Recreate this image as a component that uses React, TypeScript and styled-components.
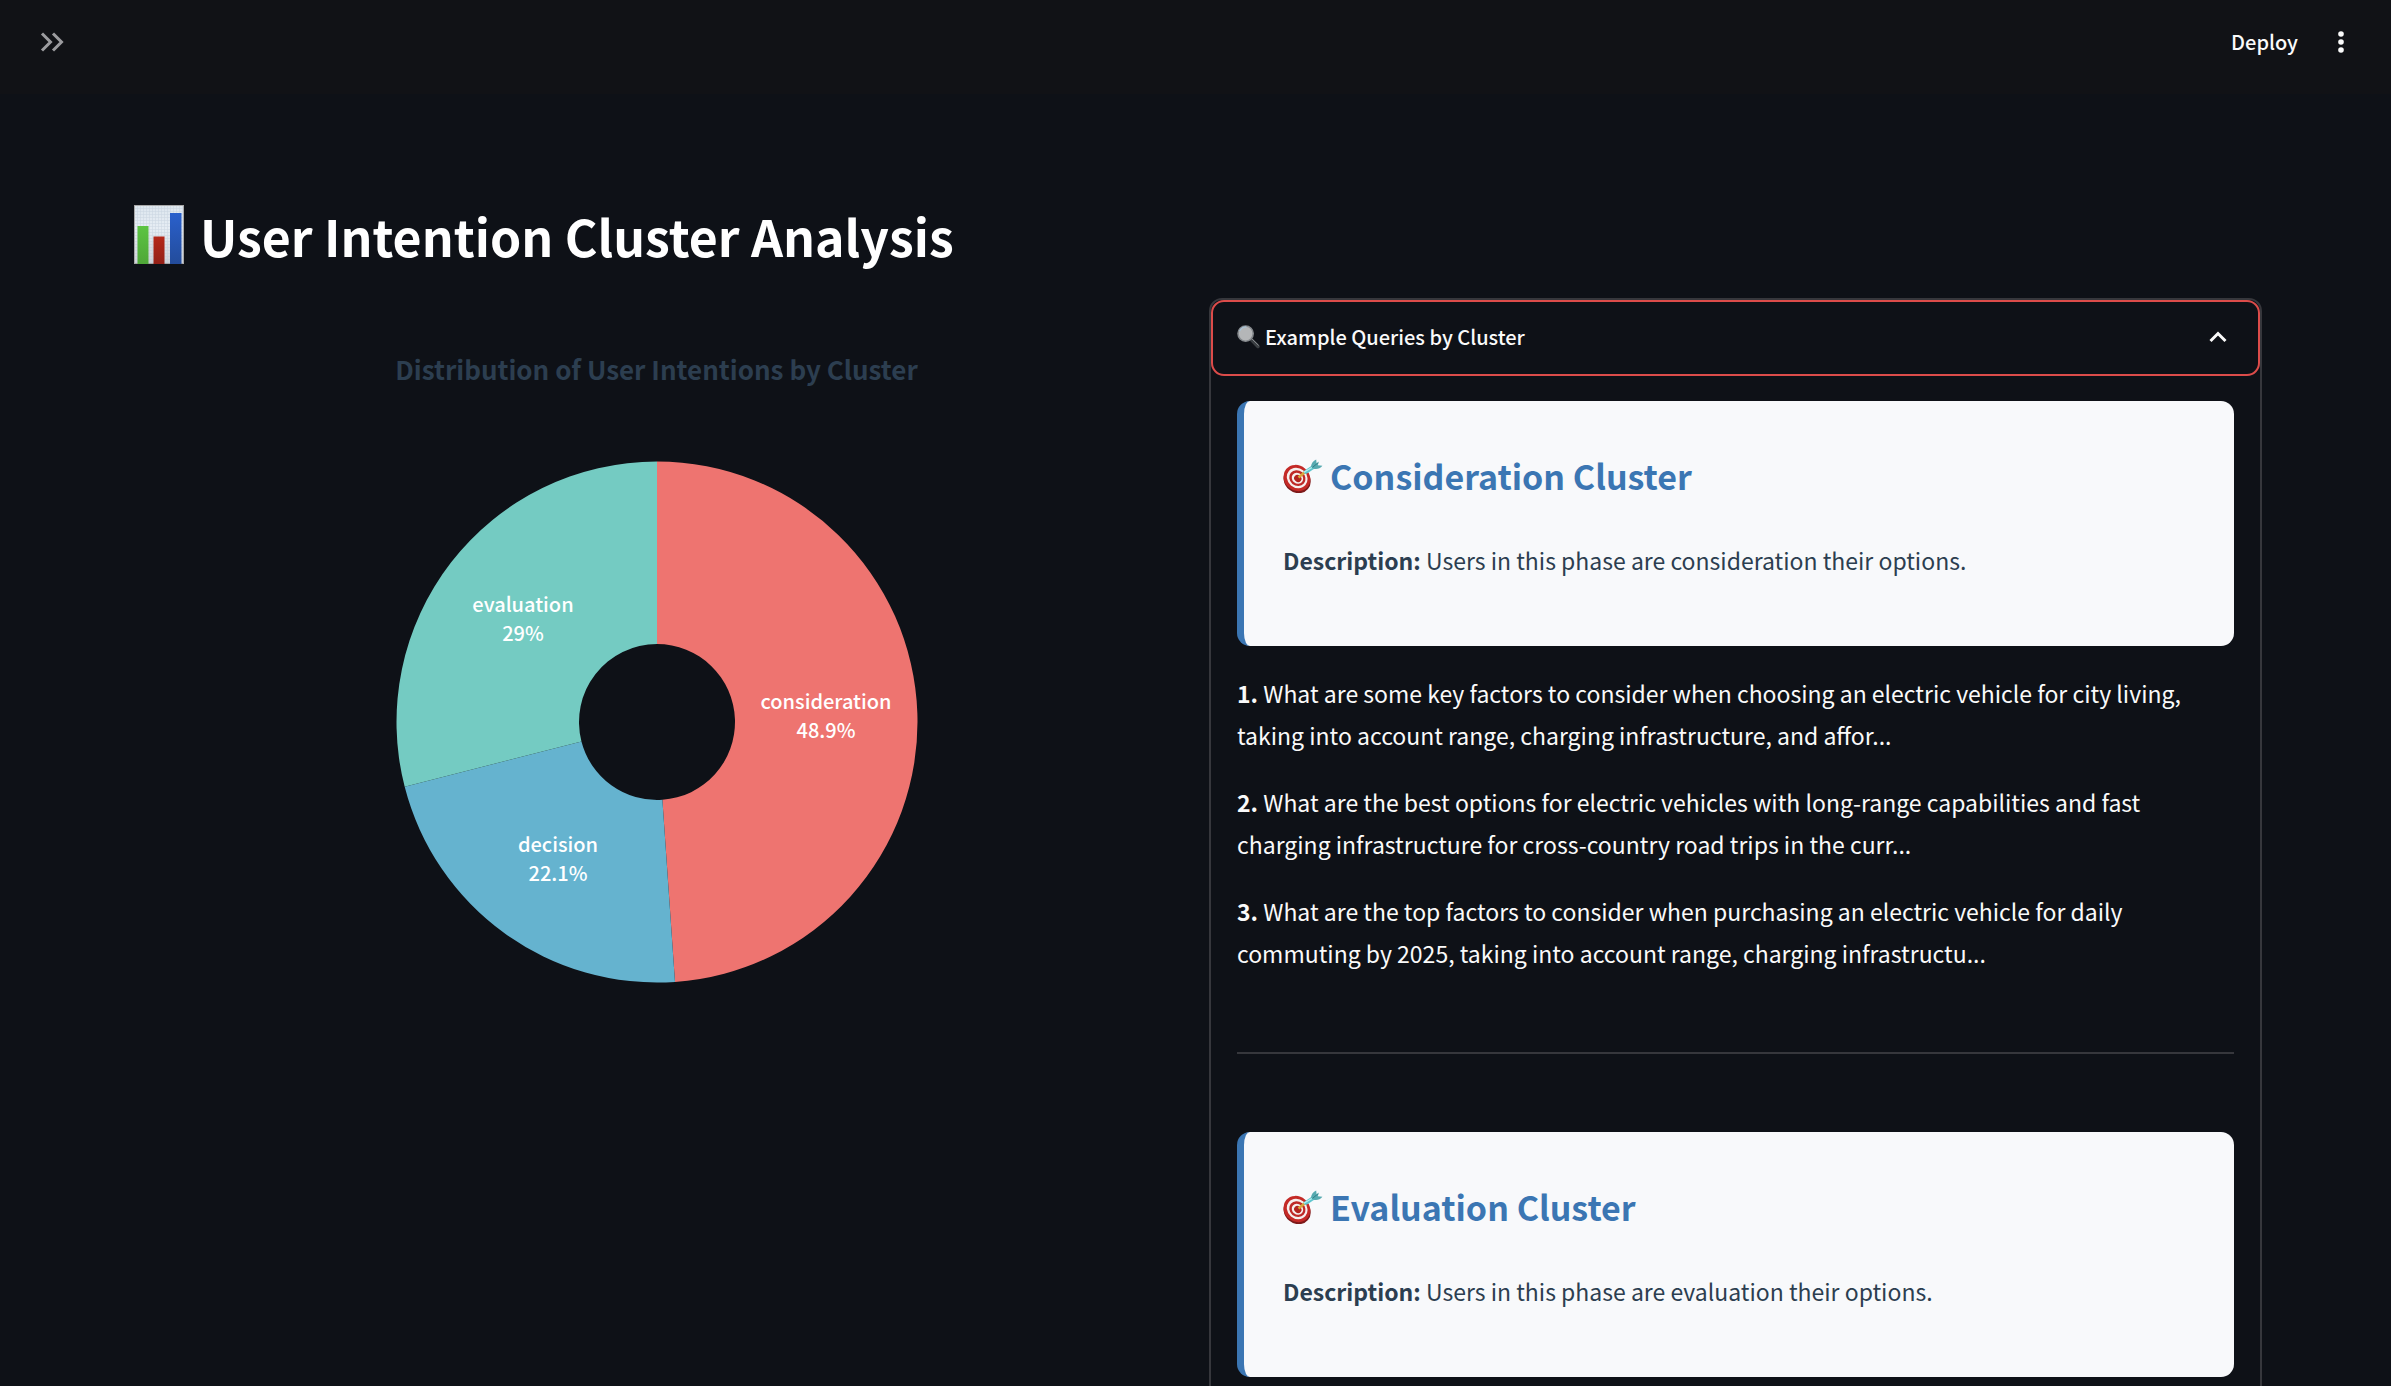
import React from 'react';
import styled, { createGlobalStyle } from 'styled-components';

const GlobalStyle = createGlobalStyle`
  *, *::before, *::after { box-sizing: border-box; }
  body {
    margin: 0;
    background: #0e1117;
    color: #fafafa;
    font-family: 'Noto Sans CJK JP', 'Noto Sans', sans-serif;
    font-size: 23px;
    line-height: 42px;
  }
`;

const Page = styled.div`
  height: 100vh;
  display: flex;
  flex-direction: column;
`;

const TopBar = styled.header`
  flex: none;
  display: flex;
  align-items: center;
  justify-content: space-between;
  height: 94px;
  padding: 0 31px 10px 33px;
  background: #111216;
`;

const Actions = styled.div`
  display: flex;
  align-items: center;
  gap: 24px;
`;

const BarButton = styled.button`
  display: flex;
  align-items: center;
  justify-content: center;
  min-width: 38px;
  height: 42px;
  padding: 0;
  border: 0;
  background: none;
  color: #fafafa;
  font: inherit;
  font-size: 20px;
  font-weight: 500;
  cursor: pointer;
`;

const Scroller = styled.main`
  flex: 1;
  min-height: 0;
  overflow: auto;
  scrollbar-width: none;
  padding: 101px 129px 0 130px;
`;

const PageTitle = styled.h1`
  display: flex;
  align-items: center;
  gap: 15px;
  margin: 0 0 23px;
  padding-left: 4px;
  font-size: 50px;
  font-weight: 700;
  line-height: 80px;
  color: #ffffff;
`;

const Columns = styled.div`
  display: grid;
  grid-template-columns: 1fr 1fr;
  gap: 26px;
  align-items: start;
`;

const Figure = styled.figure`
  display: flex;
  flex-direction: column;
  align-items: center;
  gap: 71px;
  margin: 0;
  padding-top: 50px;
`;

const FigureTitle = styled.figcaption`
  color: #2c3e50;
  font-size: 26px;
  font-weight: 700;
  line-height: 42px;
`;

const Donut = styled.svg`
  display: block;
  width: 522px;
  height: 522px;
`;

const SliceText = styled.text`
  fill: #ffffff;
  font-size: 20px;
  font-weight: 500;
  text-anchor: middle;
`;

const Expander = styled.details`
  border: 2px solid #36373c;
  border-radius: 13px;
  min-width: 0;
`;

const ExpanderHead = styled.summary`
  display: flex;
  align-items: center;
  gap: 4px;
  height: 76px;
  padding: 0 31px 3px 24px;
  border: 2px solid #dc4c4a;
  border-radius: 13px;
  font-size: 20px;
  font-weight: 500;
  list-style: none;
  cursor: pointer;
  &::-webkit-details-marker { display: none; }
`;

const HeadLabel = styled.span`
  flex: 1;
`;

const ExpanderBody = styled.div`
  padding: 25px 26px 60px;
`;

const Card = styled.section`
  min-height: 245px;
  padding: 46px 39px 44px;
  border-left: 7px solid #3b76b3;
  border-radius: 13px;
  background: #f8f9fb;
  color: #2c3e50;
`;

const CardTitle = styled.h3`
  display: flex;
  align-items: center;
  gap: 7px;
  margin: 0 0 34px;
  color: #3b76b3;
  font-size: 34px;
  font-weight: 700;
  line-height: 58px;
`;

const Text = styled.p`
  margin: 0;
`;

const Queries = styled.div`
  display: flex;
  flex-direction: column;
  gap: 25px;
  margin-top: 26px;
`;

const Divider = styled.hr`
  height: 2px;
  margin: 78px 0;
  border: 0;
  background: #36373c;
`;

const ChartIcon = () => (
  <svg width="51" height="60" viewBox="0 0 51 60" aria-hidden="true">
    <defs>
      <linearGradient id="paper" x1="0" y1="0" x2="0" y2="1">
        <stop offset="0" stopColor="#dde6ee" />
        <stop offset="0.4" stopColor="#e6edf4" />
        <stop offset="1" stopColor="#cfd3da" />
      </linearGradient>
      <linearGradient id="green" x1="0" y1="0" x2="0" y2="1">
        <stop offset="0" stopColor="#5cc443" />
        <stop offset="1" stopColor="#4fa738" />
      </linearGradient>
      <linearGradient id="red" x1="0" y1="0" x2="0" y2="1">
        <stop offset="0" stopColor="#b5281a" />
        <stop offset="1" stopColor="#932017" />
      </linearGradient>
      <linearGradient id="blue" x1="0" y1="0" x2="0" y2="1">
        <stop offset="0" stopColor="#2a60cc" />
        <stop offset="1" stopColor="#234c9b" />
      </linearGradient>
      <pattern id="mesh" width="3" height="3" patternUnits="userSpaceOnUse">
        <path d="M0 0H3M0 0V3" stroke="#b9c6d6" strokeWidth="1" opacity="0.6" />
      </pattern>
    </defs>
    <rect x="0.5" y="0.5" width="49" height="58" fill="url(#paper)" />
    <rect x="0.5" y="0.5" width="49" height="58" fill="url(#mesh)" stroke="#a8a8a8" />
    <rect x="3.5" y="21" width="11" height="38" fill="url(#green)" />
    <rect x="19.5" y="31.5" width="11" height="27.5" fill="url(#red)" />
    <rect x="36" y="8" width="11.5" height="51" fill="url(#blue)" />
  </svg>
);

const TargetIcon = () => (
  <svg width="40" height="34" viewBox="0 0 40 34" aria-hidden="true">
    <g transform="rotate(40 14 19.5)">
      <ellipse cx="15" cy="20.5" rx="14.2" ry="12.6" fill="#7d1a1a" />
      <ellipse cx="13.6" cy="19.2" rx="14" ry="12.5" fill="#c42a27" />
      <ellipse cx="13.8" cy="19" rx="10.8" ry="9.7" fill="#f6f0ee" />
      <ellipse cx="14" cy="19" rx="8.5" ry="7.6" fill="#bf2a27" />
      <ellipse cx="14.2" cy="19" rx="6" ry="5.3" fill="#f6f0ee" />
      <ellipse cx="14.6" cy="19" rx="3.8" ry="3.4" fill="#b3241f" />
    </g>
    <path d="M15.5 18.5L22 13" stroke="#d9a53a" strokeWidth="2.4" />
    <path d="M20.5 12.2L29 6.6L32 9.2L24 14.6Q21 15.8 20.5 12.2Z" fill="#5fc6ce" />
    <path d="M20.8 13.2L29 8.4" stroke="#b9f0f0" strokeWidth="1.2" />
    <path d="M28 7.6Q28.6 2.4 33.2 0.4L33.6 4.4L36 2.4L34.8 6.2L39.4 6.8Q36 11 30.6 9.8Z" fill="#56aab0" />
    <path d="M29.5 8.4L35 3.8" stroke="#2f7f88" strokeWidth="1" />
  </svg>
);

const LensIcon = () => (
  <svg width="24" height="24" viewBox="0 0 24 24" aria-hidden="true">
    <path d="M13.8 14L21 21.4" stroke="#3b3f43" strokeWidth="3.6" strokeLinecap="round" />
    <path d="M14.8 13.8L21.4 20.2" stroke="#8b8f92" strokeWidth="1" strokeLinecap="round" />
    <circle cx="8.6" cy="8.6" r="7.6" fill="#b4b6b8" stroke="#85898d" strokeWidth="1.6" />
    <path d="M2.6 6A7 7 0 0 1 9.5 1.8" fill="none" stroke="#a9c3d6" strokeWidth="1.2" />
  </svg>
);

const slices = [
  { name: 'consideration', value: 48.9, fill: '#ee7470', x: 430, y: 248 },
  { name: 'decision', value: 22.1, fill: '#65b3cf', x: 162, y: 391 },
  { name: 'evaluation', value: 29, fill: '#74cbc2', x: 127, y: 151 },
];

const CENTER = 261;
const OUTER = 260.5;
const INNER = 78;

const point = (radius: number, share: number) => {
  const angle = (share / 100) * Math.PI * 2;
  return `${CENTER + radius * Math.sin(angle)} ${CENTER - radius * Math.cos(angle)}`;
};

const slicePath = (from: number, to: number) =>
  `M${point(OUTER, from)}A${OUTER} ${OUTER} 0 0 1 ${point(OUTER, to)}` +
  `L${point(INNER, to)}A${INNER} ${INNER} 0 0 0 ${point(INNER, from)}Z`;

const IntentionChart = () => {
  let start = 0;
  return (
    <Donut viewBox="0 0 522 522" role="img" aria-label="Share of user intentions by cluster">
      {slices.map((slice) => {
        const from = start;
        start += slice.value;
        return (
          <g key={slice.name}>
            <path d={slicePath(from, start)} fill={slice.fill} />
            <SliceText x={slice.x} y={slice.y}>{slice.name}</SliceText>
            <SliceText x={slice.x} y={slice.y + 29}>{slice.value}%</SliceText>
          </g>
        );
      })}
    </Donut>
  );
};

const ClusterCard = ({ name }: { name: string }) => (
  <Card>
    <CardTitle>
      <TargetIcon />
      {name} Cluster
    </CardTitle>
    <Text>
      <strong>Description:</strong> Users in this phase are {name.toLowerCase()} their options.
    </Text>
  </Card>
);

const queries = [
  'What are some key factors to consider when choosing an electric vehicle for city living, taking into account range, charging infrastructure, and affor...',
  'What are the best options for electric vehicles with long-range capabilities and fast charging infrastructure for cross-country road trips in the curr...',
  'What are the top factors to consider when purchasing an electric vehicle for daily commuting by 2025, taking into account range, charging infrastructu...',
];

export default function App() {
  return (
    <Page>
      <GlobalStyle />
      <TopBar>
        <BarButton aria-label="Open sidebar">
          <svg width="24" height="20" viewBox="0 0 24 20" fill="none" stroke="#9c9c9f" strokeWidth="3">
            <path d="M2 1.5L10.5 10L2 18.5M13 1.5L21.5 10L13 18.5" />
          </svg>
        </BarButton>
        <Actions>
          <BarButton>Deploy</BarButton>
          <BarButton aria-label="Main menu">
            <svg width="6" height="22" viewBox="0 0 6 22" fill="#fafafa">
              <circle cx="3" cy="3" r="2.8" />
              <circle cx="3" cy="11" r="2.8" />
              <circle cx="3" cy="19" r="2.8" />
            </svg>
          </BarButton>
        </Actions>
      </TopBar>
      <Scroller>
        <PageTitle>
          <ChartIcon />
          User Intention Cluster Analysis
        </PageTitle>
        <Columns>
          <Figure>
            <FigureTitle>Distribution of User Intentions by Cluster</FigureTitle>
            <IntentionChart />
          </Figure>
          <Expander open>
            <ExpanderHead>
              <LensIcon />
              <HeadLabel>Example Queries by Cluster</HeadLabel>
              <svg width="18" height="12" viewBox="0 0 18 12" fill="none" stroke="#fafafa" strokeWidth="3">
                <path d="M1.5 10L9 2.5L16.5 10" />
              </svg>
            </ExpanderHead>
            <ExpanderBody>
              <ClusterCard name="Consideration" />
              <Queries>
                {queries.map((query, index) => (
                  <Text key={query}>
                    <strong>{index + 1}.</strong> {query}
                  </Text>
                ))}
              </Queries>
              <Divider />
              <ClusterCard name="Evaluation" />
            </ExpanderBody>
          </Expander>
        </Columns>
      </Scroller>
    </Page>
  );
}
